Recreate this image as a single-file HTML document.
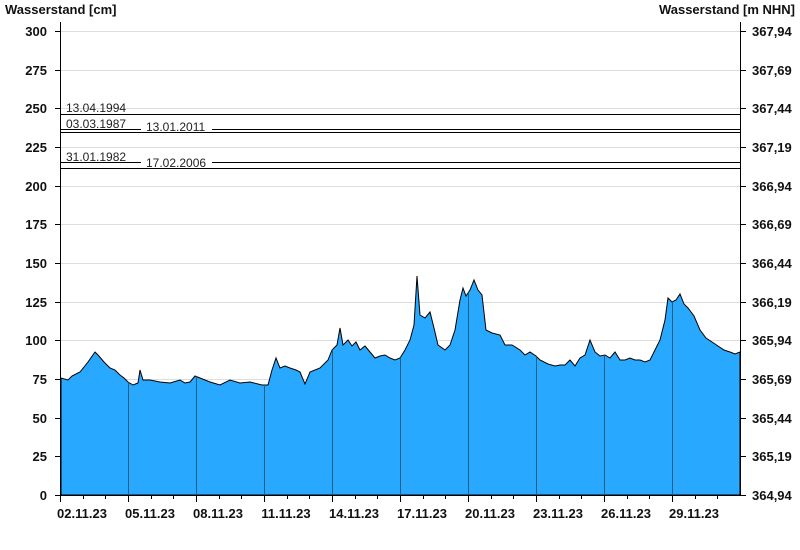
<!DOCTYPE html><html><head><style>body{margin:0;background:#fff}svg{display:block}text{font-family:"Liberation Sans",Arial,sans-serif}</style></head><body>
<svg width="800" height="550" xmlns="http://www.w3.org/2000/svg">
<defs><clipPath id="c"><polygon id="pp" points="61,495 61,378 68,380 72,376 80,372 88,362 95,352 98,355 104,362 110,368 115,370 120,375 124,378 128,382 133,385 138,383 140,370 143,380 150,380 160,382 170,383 180,380 185,383 190,382 195,376 200,378 205,380 210,382 220,385 230,380 240,383 250,382 262,385 268,385 272,370 276,358 280,368 285,366 290,368 296,370 300,372 305,384 310,372 320,368 328,360 332,350 337,345 340,328 343,345 348,340 352,346 356,342 360,350 365,346 370,352 375,358 380,356 385,355 390,358 395,360 400,358 405,350 410,340 414,325 417,276 420,315 425,318 430,312 434,328 438,345 445,350 450,345 455,330 460,300 463,288 466,296 470,290 474,280 478,290 482,295 486,330 492,333 500,335 505,345 512,345 520,350 525,355 530,352 536,356 540,360 548,364 555,366 560,365 565,365 570,360 575,366 580,358 585,355 590,340 595,352 600,356 605,355 610,358 615,352 620,360 625,360 630,358 635,360 640,360 645,362 650,360 655,350 660,340 665,320 668,298 672,302 676,300 680,294 684,304 688,308 694,316 700,330 706,338 712,342 718,346 724,350 730,352 735,354 740,352 740,495"/></clipPath></defs>
<g stroke="#ddd" stroke-width="1">
<line x1="61" x2="740" y1="31.5" y2="31.5"/><line x1="61" x2="740" y1="70.5" y2="70.5"/><line x1="61" x2="740" y1="108.5" y2="108.5"/><line x1="61" x2="740" y1="147.5" y2="147.5"/><line x1="61" x2="740" y1="186.5" y2="186.5"/><line x1="61" x2="740" y1="224.5" y2="224.5"/><line x1="61" x2="740" y1="263.5" y2="263.5"/><line x1="61" x2="740" y1="302.5" y2="302.5"/><line x1="61" x2="740" y1="340.5" y2="340.5"/><line x1="61" x2="740" y1="379.5" y2="379.5"/><line x1="61" x2="740" y1="418.5" y2="418.5"/><line x1="61" x2="740" y1="456.5" y2="456.5"/>
</g>
<use href="#pp" fill="#29a8ff" stroke="#000" stroke-width="1"/>
<g stroke="#1f5f7f" stroke-width="1" clip-path="url(#c)">
<line x1="128.5" x2="128.5" y1="250" y2="495"/><line x1="196.5" x2="196.5" y1="250" y2="495"/><line x1="264.5" x2="264.5" y1="250" y2="495"/><line x1="332.5" x2="332.5" y1="250" y2="495"/><line x1="400.5" x2="400.5" y1="250" y2="495"/><line x1="468.5" x2="468.5" y1="250" y2="495"/><line x1="536.5" x2="536.5" y1="250" y2="495"/><line x1="604.5" x2="604.5" y1="250" y2="495"/><line x1="672.5" x2="672.5" y1="250" y2="495"/>
</g>
<g stroke="#000" stroke-width="1">
<line x1="61" x2="740" y1="114.5" y2="114.5"/>
<line x1="61" x2="141" y1="129.5" y2="129.5"/><line x1="212" x2="740" y1="129.5" y2="129.5"/>
<line x1="61" x2="740" y1="132.5" y2="132.5"/>
<line x1="61" x2="141" y1="162.5" y2="162.5"/><line x1="212" x2="740" y1="162.5" y2="162.5"/>
<line x1="61" x2="740" y1="168.5" y2="168.5"/>
<line x1="60.5" x2="60.5" y1="22" y2="500"/><line x1="740.5" x2="740.5" y1="22" y2="495"/>
<line x1="55" x2="741" y1="495.5" y2="495.5"/>
</g>
<g font-size="12" fill="#222">
<text x="66" y="112">13.04.1994</text><text x="66" y="128">03.03.1987</text><text x="146" y="131">13.01.2011</text>
<text x="66" y="161">31.01.1982</text><text x="146" y="167">17.02.2006</text>
</g>
<g font-size="13" font-weight="bold" fill="#111">
<text x="5" y="14">Wasserstand [cm]</text><text x="795" y="14" text-anchor="end">Wasserstand [m NHN]</text>
</g>
<g stroke="#000" stroke-width="1" id="lt">
<path d="M55 31.5H61M55 70.5H61M55 108.5H61M55 147.5H61M55 186.5H61M55 224.5H61M55 263.5H61M55 302.5H61M55 340.5H61M55 379.5H61M55 418.5H61M55 456.5H61M55 495.5H61"/>
<path d="M740 31.5H746M740 70.5H746M740 108.5H746M740 147.5H746M740 186.5H746M740 224.5H746M740 263.5H746M740 302.5H746M740 340.5H746M740 379.5H746M740 418.5H746M740 456.5H746M740 495.5H746"/>
<path d="M60.5 495V502M128.5 495V502M196.5 495V502M264.5 495V502M332.5 495V502M400.5 495V502M468.5 495V502M536.5 495V502M604.5 495V502M672.5 495V502M83.5 495V499M105.5 495V499M151.5 495V499M173.5 495V499M219.5 495V499M241.5 495V499M287.5 495V499M309.5 495V499M355.5 495V499M377.5 495V499M423.5 495V499M445.5 495V499M491.5 495V499M513.5 495V499M559.5 495V499M581.5 495V499M627.5 495V499M649.5 495V499M695.5 495V499M717.5 495V499"/>
</g>
<g font-size="13" font-weight="bold" fill="#111" text-anchor="end">
<text x="47" y="36">300</text><text x="47" y="75">275</text><text x="47" y="113">250</text><text x="47" y="152">225</text><text x="47" y="191">200</text><text x="47" y="229">175</text><text x="47" y="268">150</text><text x="47" y="307">125</text><text x="47" y="345">100</text><text x="47" y="384">75</text><text x="47" y="423">50</text><text x="47" y="461">25</text><text x="47" y="500">0</text>
</g>
<g font-size="13" font-weight="bold" fill="#111">
<text x="752" y="36">367,94</text><text x="752" y="75">367,69</text><text x="752" y="113">367,44</text><text x="752" y="152">367,19</text><text x="752" y="191">366,94</text><text x="752" y="229">366,69</text><text x="752" y="268">366,44</text><text x="752" y="307">366,19</text><text x="752" y="345">365,94</text><text x="752" y="384">365,69</text><text x="752" y="423">365,44</text><text x="752" y="461">365,19</text><text x="752" y="500">364,94</text>
</g>
<g font-size="13" font-weight="bold" fill="#111" text-anchor="middle">
<text x="82" y="518">02.11.23</text><text x="150" y="518">05.11.23</text><text x="218" y="518">08.11.23</text><text x="286" y="518">11.11.23</text><text x="354" y="518">14.11.23</text><text x="422" y="518">17.11.23</text><text x="490" y="518">20.11.23</text><text x="558" y="518">23.11.23</text><text x="626" y="518">26.11.23</text><text x="694" y="518">29.11.23</text>
</g>
</svg></body></html>
